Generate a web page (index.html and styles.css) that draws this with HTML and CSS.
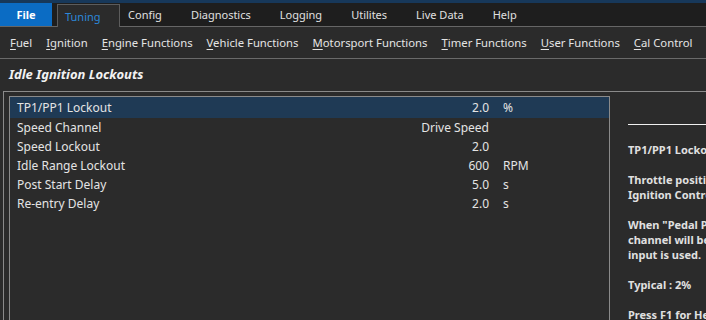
FILE: index.html
```html
<!DOCTYPE html>
<html>
<head>
<meta charset="utf-8">
<link rel="stylesheet" href="styles.css">
</head>
<body>
<div class="topline"></div>
<nav class="menubar">
  <div class="menu-item file">File</div>
  <div class="menu-item tab-active">Tuning</div>
  <div class="menu-item">Config</div>
  <div class="menu-item">Diagnostics</div>
  <div class="menu-item">Logging</div>
  <div class="menu-item">Utilites</div>
  <div class="menu-item">Live Data</div>
  <div class="menu-item">Help</div>
</nav>
<div class="toolbar">
  <div class="tool"><u>F</u>uel</div>
  <div class="tool"><u>I</u>gnition</div>
  <div class="tool"><u>E</u>ngine Functions</div>
  <div class="tool"><u>V</u>ehicle Functions</div>
  <div class="tool"><u>M</u>otorsport Functions</div>
  <div class="tool"><u>T</u>imer Functions</div>
  <div class="tool"><u>U</u>ser Functions</div>
  <div class="tool"><u>C</u>al Control</div>
  <div class="tool-sep"></div>
</div>
<div class="titlebar">Idle Ignition Lockouts</div>
<div class="frame">
  <div class="listbox">
    <div class="row selected"><span class="label">TP1/PP1 Lockout</span><span class="value">2.0</span><span class="unit">%</span></div>
    <div class="row"><span class="label">Speed Channel</span><span class="value">Drive Speed</span><span class="unit"></span></div>
    <div class="row"><span class="label">Speed Lockout</span><span class="value">2.0</span><span class="unit"></span></div>
    <div class="row"><span class="label">Idle Range Lockout</span><span class="value">600</span><span class="unit">RPM</span></div>
    <div class="row"><span class="label">Post Start Delay</span><span class="value">5.0</span><span class="unit">s</span></div>
    <div class="row"><span class="label">Re-entry Delay</span><span class="value">2.0</span><span class="unit">s</span></div>
  </div>
  <aside class="help">
    <div class="help-rule"></div>
    <p>TP1/PP1 Lockout</p>
    <p>Throttle position below which Idle<br>Ignition Control is active.</p>
    <p>When "Pedal Position" is selected this<br>channel will be used instead of throttle<br>input is used.</p>
    <p>Typical : 2%</p>
    <p>Press F1 for Help</p>
  </aside>
</div>
</body>
</html>
```
FILE: styles.css
```css
html, body {
  margin: 0;
  padding: 0;
}
body {
  width: 706px;
  height: 320px;
  overflow: hidden;
  background: #2b2b2b;
  color: #e4e4e4;
  font-family: "Noto Sans", "Open Sans", sans-serif;
  font-size: 12px;
}
.topline {
  height: 3px;
  background: #17385a;
}
.menubar {
  display: flex;
  height: 23px;
  background: #1e1e1e;
  border-bottom: 1px solid #666;
  font-size: 11px;
  white-space: nowrap;
}
.menu-item {
  display: flex;
  align-items: center;
  padding: 0 14.5px;
  color: #e0e0e0;
}
.menu-item.file {
  width: 52px;
  padding: 0;
  justify-content: center;
  background: #0b6cc4;
  color: #fff;
  font-weight: bold;
}
.menu-item.tab-active {
  margin-left: 5px;
  margin-top: 1px;
  margin-bottom: -1px;
  padding: 0 18px 0 7px;
  border: 1px solid #5c5c5c;
  border-bottom: none;
  background: #2b2b2b;
  color: #2b88da;
  margin-right: -6px;
}
.toolbar {
  display: flex;
  align-items: center;
  height: 31px;
  padding-left: 10px;
  gap: 14px;
  border-bottom: 1px solid #6a6a6a;
  font-size: 11.3px;
  white-space: nowrap;
  overflow: hidden;
}
.tool u {
  text-underline-offset: 2px;
}
.tool-sep {
  margin-left: auto;
  margin-right: 2px;
  flex: none;
  width: 1px;
  height: 29px;
  background: #9a9a9a;
}
.titlebar {
  height: 32px;
  box-sizing: border-box;
  padding-bottom: 2px;
  display: flex;
  align-items: center;
  padding-left: 9px;
  font-weight: bold;
  font-style: italic;
  font-size: 13px;
  color: #f2f2f2;
}
.frame {
  display: flex;
  margin-left: 3px;
  padding: 4px 0 0 5px;
  border-top: 1px solid #8a8a8a;
  border-left: 1px solid #8a8a8a;
  height: 400px;
}
.listbox {
  width: 599px;
  flex: none;
  border: 1px solid #8a8a8a;
  border-bottom: none;
}
.row {
  display: grid;
  grid-template-columns: 300px 1fr 106px;
  align-items: center;
  height: 19px;
}
.row.selected {
  height: 21px;
  background: #1f3a55;
}
.label {
  padding-left: 7px;
}
.value {
  text-align: right;
  padding-right: 14px;
}
.help {
  flex: 1;
  overflow: hidden;
  padding-left: 18px;
  padding-top: 28px;
  white-space: nowrap;
  font-weight: bold;
  font-size: 11px;
  color: #e0e0e0;
  line-height: 15px;
}
.help-rule {
  height: 1px;
  background: #f0f0f0;
  margin-bottom: 17px;
}
.help p {
  margin: 0 0 15px 0;
}
```
